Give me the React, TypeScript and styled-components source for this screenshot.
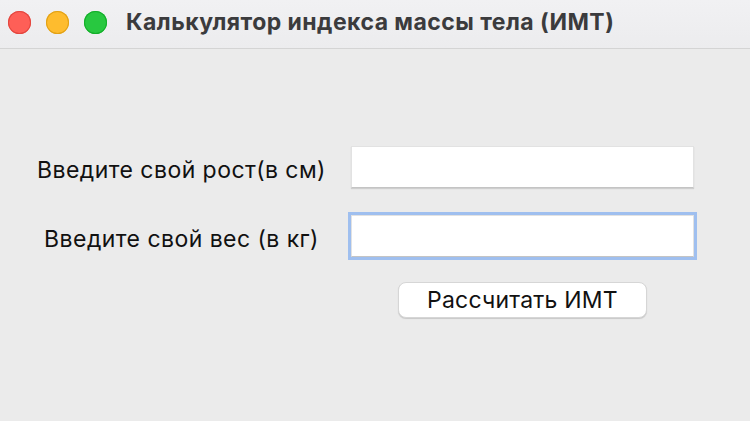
import React from "react";
import styled, { createGlobalStyle } from "styled-components";

const GlobalStyle = createGlobalStyle`
  html, body {
    margin: 0;
    padding: 0;
    background: #ebebeb;
  }
  * {
    box-sizing: border-box;
  }
`;

const Window = styled.div`
  width: 750px;
  height: 421px;
  display: flex;
  flex-direction: column;
  background: #ebebeb;
  font-family: Inter, "Liberation Sans", sans-serif;
  overflow: hidden;
`;

const TitleBar = styled.div`
  height: 49px;
  flex-shrink: 0;
  display: flex;
  align-items: center;
  padding: 0 0 4px 8px;
  background: linear-gradient(#f1f1f3, #ececee);
  border-bottom: 1px solid #d4d4d4;
`;

const Lights = styled.div`
  display: flex;
  gap: 15px;
  margin-right: 19px;
`;

const Light = styled.span<{ $color: string; $edge: string }>`
  width: 23px;
  height: 23px;
  border-radius: 50%;
  background: ${(p) => p.$color};
  box-shadow: inset 0 0 0 1px ${(p) => p.$edge};
`;

const Title = styled.h1`
  margin: 0;
  font-size: 23px;
  font-weight: 700;
  color: #3b3b3d;
  letter-spacing: 0.45px;
`;

const Content = styled.div`
  flex: 1;
  padding: 97px 0 0 30px;
`;

const Form = styled.div`
  display: grid;
  grid-template-columns: 303px 349px;
  grid-auto-rows: 42px;
  column-gap: 15px;
  row-gap: 27px;
  align-items: center;
`;

const Label = styled.label`
  justify-self: center;
  font-size: 23px;
  letter-spacing: 0.45px;
  white-space: nowrap;
  color: #111111;
  padding-top: 5px;
`;

const Field = styled.input<{ $focused?: boolean }>`
  justify-self: center;
  width: 343px;
  height: 42px;
  background: #ffffff;
  border: 1px solid #e2e2e2;
  border-bottom-color: #c4c4c4;
  outline: none;
  box-shadow: ${(p) =>
    p.$focused ? "0 0 0 3px #9fbfef" : "0 1px 1px rgba(0, 0, 0, 0.12)"};
  font-size: 18px;
`;

const ButtonCell = styled.div`
  grid-column: 2;
  align-self: start;
  display: flex;
  justify-content: center;
  margin-top: -2px;
`;

const Button = styled.button`
  width: 249px;
  height: 36px;
  background: #ffffff;
  border: 1px solid #d6d6d6;
  border-radius: 8px;
  box-shadow: 0 1px 1px rgba(0, 0, 0, 0.15);
  font-family: Inter, "Liberation Sans", sans-serif;
  font-size: 23px;
  letter-spacing: 0.2px;
  color: #111111;
  padding: 0;
`;

export default function App() {
  return (
    <>
      <GlobalStyle />
      <Window>
        <TitleBar>
          <Lights>
            <Light $color="#fe5f57" $edge="#e2463f" />
            <Light $color="#febc2e" $edge="#e1a116" />
            <Light $color="#28c840" $edge="#14ae2a" />
          </Lights>
          <Title>Калькулятор индекса массы тела (ИМТ)</Title>
        </TitleBar>
        <Content>
          <Form>
            <Label>Введите свой рост(в см)</Label>
            <Field />
            <Label>Введите свой вес (в кг)</Label>
            <Field $focused />
            <ButtonCell>
              <Button>Рассчитать ИМТ</Button>
            </ButtonCell>
          </Form>
        </Content>
      </Window>
    </>
  );
}
